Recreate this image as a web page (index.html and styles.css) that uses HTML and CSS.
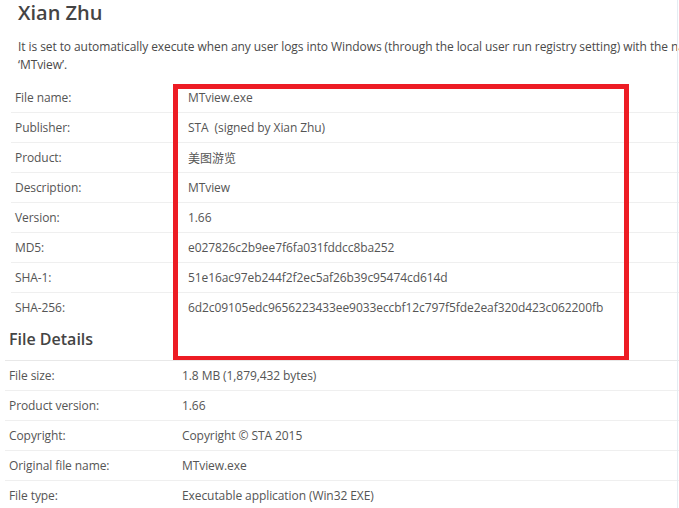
FILE: index.html
```html
<!DOCTYPE html>
<html lang="en">
<head>
<meta charset="utf-8">
<title>Xian Zhu</title>
<link rel="stylesheet" href="styles.css">
</head>
<body>
<div class="page">
  <section class="sec sec-top">
    <h1 class="title">Xian Zhu</h1>
    <p class="desc">It is set to automatically execute when any user logs into Windows (through the local user run registry setting) with the name ‘MTview’.</p>
    <div class="rows">
      <div class="row"><div class="k">File name:</div><div class="v">MTview.exe</div></div>
      <div class="row"><div class="k">Publisher:</div><div class="v">STA&nbsp; (signed by Xian Zhu)</div></div>
      <div class="row"><div class="k">Product:</div><div class="v cjk">美图游览</div></div>
      <div class="row"><div class="k">Description:</div><div class="v">MTview</div></div>
      <div class="row"><div class="k">Version:</div><div class="v">1.66</div></div>
      <div class="row"><div class="k">MD5:</div><div class="v">e027826c2b9ee7f6fa031fddcc8ba252</div></div>
      <div class="row"><div class="k">SHA-1:</div><div class="v">51e16ac97eb244f2f2ec5af26b39c95474cd614d</div></div>
      <div class="row last"><div class="k">SHA-256:</div><div class="v">6d2c09105edc9656223433ee9033eccbf12c797f5fde2eaf320d423c062200fb</div></div>
    </div>
    <div class="highlight"></div>
  </section>
  <section class="sec sec-bottom">
    <h2 class="sub">File Details</h2>
    <div class="rows">
      <div class="row"><div class="k">File size:</div><div class="v">1.8 MB (1,879,432 bytes)</div></div>
      <div class="row"><div class="k">Product version:</div><div class="v">1.66</div></div>
      <div class="row"><div class="k">Copyright:</div><div class="v">Copyright © STA 2015</div></div>
      <div class="row"><div class="k">Original file name:</div><div class="v">MTview.exe</div></div>
      <div class="row"><div class="k">File type:</div><div class="v">Executable application (Win32 EXE)</div></div>
    </div>
  </section>
</div>
</body>
</html>
```

FILE: styles.css
```css
html, body {
  margin: 0;
  padding: 0;
  background: #ffffff;
}
body {
  font-family: "Open Sans", "Noto Sans CJK SC", sans-serif;
  color: #555555;
  overflow: hidden;
}
.page {
  width: 679px;
  height: 508px;
  overflow: hidden;
  position: relative;
}
.page::after {
  content: "";
  position: absolute;
  top: 0;
  bottom: 0;
  left: 677px;
  width: 1px;
  background: #e4ecf3;
}
.sec {
  position: relative;
}
.sec-top {
  padding-left: 11px;
}
.sec-bottom {
  padding-left: 5px;
}
.title {
  margin: 0 0 0 7px;
  padding-top: 1px;
  font-size: 20px;
  font-weight: 600;
  line-height: 24px;
  color: #444444;
}
.desc {
  margin: 13px 0 0 7px;
  font-size: 12px;
  letter-spacing: -0.08px;
  line-height: 18px;
  width: 704px;
  color: #4a4a4a;
}
.rows {
  margin-top: 9px;
}
.sec-bottom .rows {
  margin-top: 0;
}
.row {
  display: flex;
  height: 29px;
  line-height: 29px;
  border-bottom: 1px solid #efefef;
  font-size: 12px;
  letter-spacing: -0.08px;
  white-space: nowrap;
}
.row.last {
  border-bottom: 0;
  height: 30px;
}
.k {
  width: 173px;
  padding-left: 4px;
  flex: none;
}
.v {
  padding-left: 0;
}
.cjk {
  font-family: "Noto Sans CJK SC", sans-serif;
  letter-spacing: 0;
}
.sub {
  margin: 0;
  padding: 5px 0 10px 4px;
  font-size: 16px;
  font-weight: 600;
  line-height: 22px;
  color: #444444;
  border-bottom: 1px solid #e8e8e8;
}
.highlight {
  position: absolute;
  left: 173px;
  top: 84px;
  width: 446px;
  height: 267px;
  border: 5px solid #ed1c24;
  pointer-events: none;
}
```
